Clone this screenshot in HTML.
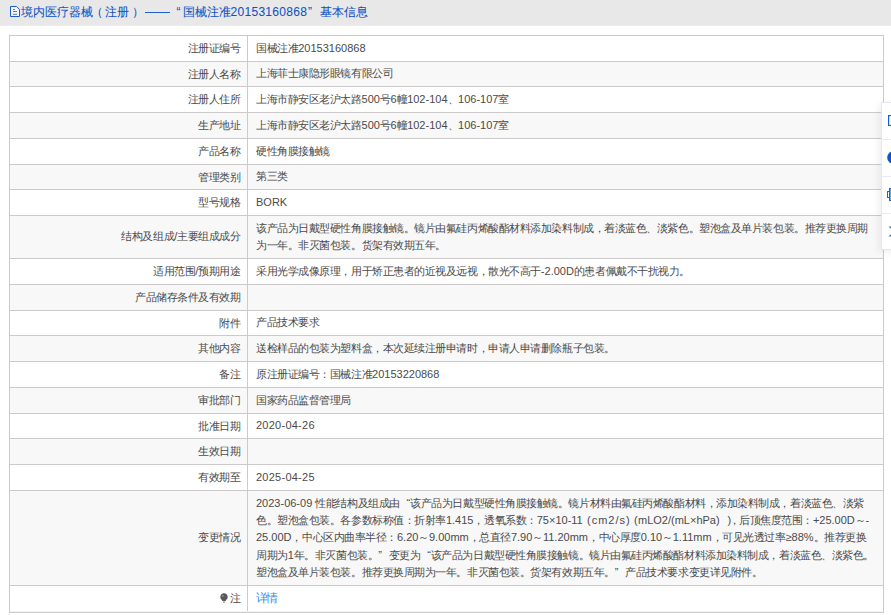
<!DOCTYPE html>
<html><head><meta charset="utf-8">
<style>
html,body{margin:0;padding:0;background:#fff;width:891px;height:615px;overflow:hidden;position:relative;font-family:"Liberation Sans",sans-serif;}
.hdr{position:absolute;left:0;top:0;width:891px;height:25px;background:#e8e8e8;}
.title{position:absolute;left:21px;top:4px;font-size:12px;line-height:17px;color:#1052c6;-webkit-text-stroke:0.07px #1052c6;white-space:nowrap;}
.doc{position:absolute;left:10px;top:6px;width:10px;height:11px;}
.row{position:absolute;left:9px;width:875px;border:1px solid #cdcacc;border-bottom:none;background:#fff;box-sizing:border-box;}
.row.odd{background:#f8f8f8;}
.lab{position:absolute;left:0;top:0;width:237px;bottom:0;border-right:1px solid #cdcacc;display:flex;align-items:center;justify-content:flex-end;}
.li{padding-right:6.5px;}
.lab,.val{font-size:11px;color:#4a4a4a;white-space:nowrap;}
.val{position:absolute;left:238px;right:0;top:0;bottom:0;display:flex;align-items:center;}
.vi{padding-left:8px;}
.c{letter-spacing:-0.45px;}
.ql{display:inline-block;width:10.5px;text-align:right;}
.qr{display:inline-block;width:10.5px;text-align:left;}
.ln{height:17.1px;line-height:17.1px;}
.p{position:absolute;top:0;}
.bot{position:absolute;left:9px;top:612px;width:875px;height:1px;background:#cdcacc;}
.pin{width:8px;height:10px;vertical-align:-1px;margin-right:1.5px;}
a{color:#3b8af5;font-size:12px;letter-spacing:-1.6px;}
.tb{position:absolute;left:881px;top:102px;width:40px;height:148px;background:#fff;border:1px solid #e4e6f2;box-sizing:border-box;box-shadow:-2px 2px 8px rgba(0,0,0,0.07);}
.ti{position:absolute;left:0;width:40px;height:37px;border-bottom:1px solid #e8eaf4;box-sizing:border-box;}
</style></head><body>
<div class="hdr"></div><div style="position:absolute;left:0;top:25px;width:891px;height:1px;background:#e9ebf5"></div>
<svg class="doc" viewBox="0 0 10 11"><path d="M0.5 0.5H6.6L9.5 3.4V10.5H0.5Z" fill="#f2f4fa" stroke="#1a5cd0"/><path d="M3 3.5h2M3 5.5h4M3 8.3h4" stroke="#3b6fd6" stroke-width="0.9"/></svg>
<div class="title" style="left:20.5px">境内医疗器械</div>
<div class="title" style="left:90.5px">（</div>
<div class="title" style="left:105px">注册</div>
<div class="title" style="left:131.5px">）</div>
<div style="position:absolute;left:145px;top:12px;width:25px;height:1px;background:#1f5fc8"></div>
<div class="title" style="left:176.5px">“</div>
<div class="title" style="left:182.5px">国械注准<span style="letter-spacing:0.3px">20153160868</span></div>
<div class="title" style="left:308px">”</div>
<div class="title" style="left:320px">基本信息</div>
<div class="row" style="top:35px;height:26px"><div class="lab"><div class="li"><span class="c">注册证编号</span></div></div><div class="val"><div class="vi"><div class="ln"><span class="c">国械注准</span>20153160868</div></div></div></div>
<div class="row odd" style="top:61px;height:25px"><div class="lab"><div class="li"><span class="c">注册人名称</span></div></div><div class="val"><div class="vi"><div class="ln"><span class="c">上海菲士康隐形眼镜有限公司</span></div></div></div></div>
<div class="row" style="top:86px;height:26px"><div class="lab"><div class="li"><span class="c">注册人住所</span></div></div><div class="val"><div class="vi"><div class="ln"><span class="c">上海市静安区老沪太路</span>500<span class="c">号</span>6<span class="c">幢</span>102-104<span class="c">、</span>106-107<span class="c">室</span></div></div></div></div>
<div class="row odd" style="top:112px;height:26px"><div class="lab"><div class="li"><span class="c">生产地址</span></div></div><div class="val"><div class="vi"><div class="ln"><span class="c">上海市静安区老沪太路</span>500<span class="c">号</span>6<span class="c">幢</span>102-104<span class="c">、</span>106-107<span class="c">室</span></div></div></div></div>
<div class="row" style="top:138px;height:26px"><div class="lab"><div class="li"><span class="c">产品名称</span></div></div><div class="val"><div class="vi"><div class="ln"><span class="c">硬性角膜接触镜</span></div></div></div></div>
<div class="row odd" style="top:164px;height:25px"><div class="lab"><div class="li"><span class="c">管理类别</span></div></div><div class="val"><div class="vi"><div class="ln"><span class="c">第三类</span></div></div></div></div>
<div class="row" style="top:189px;height:26px"><div class="lab"><div class="li"><span class="c">型号规格</span></div></div><div class="val"><div class="vi"><div class="ln">BORK</div></div></div></div>
<div class="row odd" style="top:215px;height:43px"><div class="lab"><div class="li" style="position:relative;top:-1px"><span class="c">结构及组成</span>/<span class="c">主要组成成分</span></div></div><div class="val"><div class="vi"><div class="ln"><span class="c">该产品为日戴型硬性角膜接触镜。镜片由氟硅丙烯酸酯材料添加染料制成，着淡蓝色、淡紫色。塑泡盒及单片装包装。推荐更换周期</span></div><div class="ln"><span class="c">为一年。非灭菌包装。货架有效期五年。</span></div></div></div></div>
<div class="row" style="top:258px;height:26px"><div class="lab"><div class="li"><span class="c">适用范围</span>/<span class="c">预期用途</span></div></div><div class="val"><div class="vi"><div class="ln"><span class="c">采用光学成像原理，用于矫正患者的近视及远视，散光不高于</span>-2.00D<span class="c">的患者佩戴不干扰视力。</span></div></div></div></div>
<div class="row odd" style="top:284px;height:26px"><div class="lab"><div class="li"><span class="c">产品储存条件及有效期</span></div></div><div class="val"><div class="vi"><div class="ln"></div></div></div></div>
<div class="row" style="top:310px;height:25px"><div class="lab"><div class="li"><span class="c">附件</span></div></div><div class="val"><div class="vi"><div class="ln"><span class="c">产品技术要求</span></div></div></div></div>
<div class="row odd" style="top:335px;height:26px"><div class="lab"><div class="li"><span class="c">其他内容</span></div></div><div class="val"><div class="vi"><div class="ln"><span class="c">送检样品的包装为塑料盒，本次延续注册申请时，申请人申请删除瓶子包装。</span></div></div></div></div>
<div class="row" style="top:361px;height:26px"><div class="lab"><div class="li"><span class="c">备注</span></div></div><div class="val"><div class="vi"><div class="ln"><span class="c">原注册证编号：国械注准</span>20153220868</div></div></div></div>
<div class="row odd" style="top:387px;height:26px"><div class="lab"><div class="li"><span class="c">审批部门</span></div></div><div class="val"><div class="vi"><div class="ln"><span class="c">国家药品监督管理局</span></div></div></div></div>
<div class="row" style="top:413px;height:25px"><div class="lab"><div class="li"><span class="c">批准日期</span></div></div><div class="val"><div class="vi"><div class="ln"><span style="letter-spacing:0.25px">2020-04-26</span></div></div></div></div>
<div class="row odd" style="top:438px;height:26px"><div class="lab"><div class="li"><span class="c">生效日期</span></div></div><div class="val"><div class="vi"><div class="ln"></div></div></div></div>
<div class="row" style="top:464px;height:26px"><div class="lab"><div class="li"><span class="c">有效期至</span></div></div><div class="val"><div class="vi"><div class="ln"><span style="letter-spacing:0.25px">2025-04-25</span></div></div></div></div>
<div class="row odd" style="top:490px;height:95px"><div class="lab"><div class="li" style="position:relative;top:-1px"><span class="c">变更情况</span></div></div><div class="val"><div class="vi"><div class="ln">2023-06-09 <span class="c">性能结构及组成由</span><span class="ql">“</span><span class="c">该产品为日戴型硬性角膜接触镜。镜片材料由氟硅丙烯酸酯材料，添加染料制成，着淡蓝色、淡紫</span></div><div class="ln" style="position:relative;width:620px"><span class="p" style="left:0"><span class="c">色。塑泡盒包装。各参数标称值：折射率</span>1.415<span class="c">，透氧系数：</span>75×10-11</span><span class="p" style="left:331px;letter-spacing:1px">(cm2/s)</span><span class="p" style="left:378px">(</span><span class="p" style="left:382px">mLO2/(mL×hPa)</span><span class="p" style="left:471.5px">)</span><span class="p" style="left:472.5px"><span class="c">，后顶焦度范围：</span>+25.00D<span class="c">～</span>-</span></div><div class="ln">25.00D<span class="c">，中心区内曲率半径：</span>6.20<span class="c">～</span>9.00mm<span class="c">，总直径</span>7.90<span class="c">～</span>11.20mm<span class="c">，中心厚度</span>0.10<span class="c">～</span>1.11mm<span class="c">，可见光透过率</span>≥88%<span class="c">。推荐更换</span></div><div class="ln"><span class="c">周期为</span>1<span class="c">年。非灭菌包装。</span><span class="qr">”</span><span class="c">变更为</span><span class="ql">“</span><span class="c">该产品为日戴型硬性角膜接触镜。镜片由氟硅丙烯酸酯材料添加染料制成，着淡蓝色、淡紫色。</span></div><div class="ln"><span class="c">塑泡盒及单片装包装。推荐更换周期为一年。非灭菌包装。货架有效期五年。</span><span class="qr">”</span><span class="c">产品技术要求变更详见附件。</span></div></div></div></div>
<div class="row" style="top:585px;height:27px"><div class="lab"><div class="li" style="position:relative;top:-1px"><svg class="pin" viewBox="0 0 8 10"><path d="M4 0.3C1.9 0.3 0.3 1.9 0.3 3.9c0 1.5 0.9 2.5 1.7 3.2L2.3 8h3.4l0.3-0.9C6.8 6.4 7.7 5.4 7.7 3.9 7.7 1.9 6.1 0.3 4 0.3z" fill="#58585c"/><path d="M2.8 8.6h2.4L4.8 9.7H3.2z" fill="#8a8a8e"/><circle cx="2.8" cy="2.8" r="0.9" fill="#9a9aa0"/></svg><span class="c">注</span></div></div><div class="val"><div class="vi"><div class="ln"><a>详情</a></div></div></div></div>
<div class="bot"></div><div style="position:absolute;left:10px;top:611px;width:873px;height:1px;background:#f4f5fb"></div>
<div class="tb">
<div class="ti" style="top:0"><svg style="position:absolute;left:6px;top:12px" width="12" height="11" viewBox="0 0 12 11"><rect x="0.6" y="0.5" width="10.5" height="10" fill="none" stroke="#0f5ed6" stroke-width="1.2"/></svg></div>
<div class="ti" style="top:37px"><svg style="position:absolute;left:5px;top:11px" width="13" height="13" viewBox="0 0 13 13"><circle cx="6.5" cy="6.5" r="6.3" fill="#0d58c4"/></svg></div>
<div class="ti" style="top:74px"><svg style="position:absolute;left:5px;top:11px" width="14" height="14" viewBox="0 0 14 14"><rect x="0.5" y="3.5" width="8" height="6" fill="#fff" stroke="#2a5fd8"/><rect x="2.5" y="0.5" width="6" height="12" fill="#58b6f5" stroke="#1b63d6"/></svg></div>
<div class="ti" style="top:111px;border-bottom:none"><svg style="position:absolute;left:7px;top:12px" width="12" height="12" viewBox="0 0 12 12"><path d="M0.5 0.5L10.5 10.5M10.5 0.5L0.5 10.5" stroke="#1b5fd1" stroke-width="1.2"/></svg></div>
</div>
</body></html>
